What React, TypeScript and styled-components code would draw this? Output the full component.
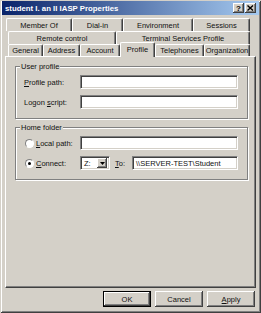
import * as React from 'react';
import styled, { createGlobalStyle } from 'styled-components';

const face = '#d4d0c8';
const shadow = '#808080';
const darkShadow = '#404040';

const GlobalStyle = createGlobalStyle`
    html, body {
        margin: 0;
        padding: 0;
        background: ${face};
    }
`;

const Window = styled.div`
    width: 261px;
    height: 313px;
    box-sizing: border-box;
    padding: 1px 4px 2px 4px;
    background: ${face};
    box-shadow: inset 1px 1px ${face}, inset -1px -1px ${darkShadow}, inset 2px 2px #fff, inset -2px -2px ${shadow};
    display: flex;
    flex-direction: column;
    font-family: 'Liberation Sans', Arial, sans-serif;
    font-size: 7.5px;
    color: #111;
`;

const TitleBar = styled.div`
    height: 14px;
    margin: 0 -2px;
    padding: 0 3px 0 3px;
    display: flex;
    align-items: center;
    background: linear-gradient(to right, #0a246a, #a6caf0);
    color: #fff;
    font-weight: bold;
    font-size: 7.8px;
    .title {
        flex: 1;
        white-space: nowrap;
    }
`;

const CaptionButton = styled.div`
    width: 11px;
    height: 10px;
    box-sizing: border-box;
    display: flex;
    align-items: center;
    justify-content: center;
    background: ${face};
    color: #000;
    font-size: 8px;
    font-weight: bold;
    box-shadow: inset -1px -1px ${darkShadow}, inset 1px 1px #fff, inset -2px -2px ${shadow};
    & + & {
        margin-left: 1px;
    }
`;

const TabStrip = styled.div`
    margin: 3px 1px 0;
    display: flex;
    flex-direction: column;
`;

const TabRow = styled.div<{ $left: number; $height: number }>`
    height: ${p => p.$height}px;
    padding: 0 6px 0 ${p => p.$left}px;
    display: flex;
`;

const Tab = styled.div<{ $w: number; $active?: boolean }>`
    flex: 0 0 ${p => p.$w}px;
    box-sizing: border-box;
    display: flex;
    align-items: center;
    justify-content: center;
    white-space: nowrap;
    background: ${face};
    border-top: 1px solid #fff;
    border-left: 1px solid #fff;
    border-right: 1px solid ${darkShadow};
    box-shadow: inset -1px 0 ${shadow};
    border-radius: 2px 2px 0 0;
    ${p =>
        p.$active &&
        `
        margin-top: -2px;
        margin-bottom: -1px;
        padding-bottom: 1px;
        position: relative;
        z-index: 1;
    `}
`;

const Panel = styled.div`
    height: 232px;
    margin: 0 1px;
    box-sizing: border-box;
    border-top: 1px solid #fff;
    border-left: 1px solid #fff;
    border-right: 1px solid ${darkShadow};
    border-bottom: 1px solid ${darkShadow};
    box-shadow: inset -1px -1px ${shadow};
    padding: 0 7px 0 9px;
    display: flex;
    flex-direction: column;
`;

const Group = styled.fieldset<{ $top: number }>`
    margin: ${p => p.$top}px 0 0;
    padding: 4px 9px 9px 8px;
    min-width: 0;
    border: 1px solid ${shadow};
    box-shadow: inset 1px 1px #fff, 1px 1px #fff;
    display: flex;
    flex-direction: column;
    gap: 6px;
    legend {
        margin-left: -4px;
        padding: 0 1px;
        background: ${face};
        line-height: 9px;
    }
`;

const Row = styled.div`
    height: 14px;
    display: flex;
    align-items: center;
`;

const Label = styled.label`
    flex: 0 0 56px;
    display: flex;
    align-items: center;
    white-space: nowrap;
`;

const Radio = styled.span<{ $checked?: boolean }>`
    width: 9px;
    height: 9px;
    margin: 0 2px 0 1px;
    box-sizing: border-box;
    border-radius: 50%;
    background: #fff;
    border: 1px solid ${shadow};
    border-right-color: #fff;
    border-bottom-color: #fff;
    display: flex;
    align-items: center;
    justify-content: center;
    &::after {
        content: '';
        width: 3px;
        height: 3px;
        border-radius: 50%;
        background: ${p => (p.$checked ? '#000' : 'transparent')};
    }
`;

const TextBox = styled.div<{ $w?: number }>`
    flex: ${p => (p.$w ? `0 0 ${p.$w}px` : '1')};
    height: 14px;
    box-sizing: border-box;
    background: #fff;
    border-top: 1px solid ${shadow};
    border-left: 1px solid ${shadow};
    border-right: 1px solid #fff;
    border-bottom: 1px solid #fff;
    box-shadow: inset 1px 1px ${darkShadow}, inset -1px -1px ${face};
    padding: 0 3px;
    display: flex;
    align-items: center;
    white-space: nowrap;
    overflow: hidden;
`;

const Combo = styled(TextBox)`
    padding: 2px 2px 2px 3px;
    justify-content: space-between;
`;

const DropButton = styled.span`
    width: 10px;
    height: 10px;
    box-sizing: border-box;
    background: ${face};
    box-shadow: inset -1px -1px ${darkShadow}, inset 1px 1px #fff, inset -2px -2px ${shadow};
    display: flex;
    align-items: center;
    justify-content: center;
`;

const ToLabel = styled.span`
    margin: 0 7px 0 5px;
`;

const U = styled.span`
    text-decoration: underline;
`;

const ButtonRow = styled.div`
    margin-top: 3px;
    padding-right: 2px;
    display: flex;
    justify-content: flex-end;
    gap: 4px;
`;

const Button = styled.div<{ $default?: boolean }>`
    width: 48px;
    height: 16px;
    box-sizing: border-box;
    display: flex;
    align-items: center;
    justify-content: center;
    background: ${face};
    border: ${p => (p.$default ? '1px solid #000' : 'none')};
    box-shadow: inset -1px -1px ${darkShadow}, inset 1px 1px #fff, inset -2px -2px ${shadow};
`;

const rows = [
    {
        left: 1,
        height: 13,
        tabs: [
            { label: 'Member Of', w: 66 },
            { label: 'Dial-in', w: 51 },
            { label: 'Environment', w: 70 },
            { label: 'Sessions', w: 57 },
        ],
    },
    {
        left: 3,
        height: 13,
        tabs: [
            { label: 'Remote control', w: 108 },
            { label: 'Terminal Services Profile', w: 134 },
        ],
    },
    {
        left: 3,
        height: 12,
        tabs: [
            { label: 'General', w: 35 },
            { label: 'Address', w: 37 },
            { label: 'Account', w: 40 },
            { label: 'Profile', w: 35, active: true },
            { label: 'Telephones', w: 49 },
            { label: 'Organization', w: 46 },
        ],
    },
];

export default function App() {
    return (
        <>
            <GlobalStyle />
            <Window>
                <TitleBar>
                    <span className="title">student I. an II IASP Properties</span>
                    <CaptionButton>?</CaptionButton>
                    <CaptionButton>
                        <svg width="7" height="6" viewBox="0 0 7 6">
                            <path d="M0.5 0.5 L6 5.5 M6 0.5 L0.5 5.5" stroke="#000" strokeWidth="1.4" />
                        </svg>
                    </CaptionButton>
                </TitleBar>

                <TabStrip>
                    {rows.map((row, i) => (
                        <TabRow key={i} $left={row.left} $height={row.height}>
                            {row.tabs.map(t => (
                                <Tab key={t.label} $w={t.w} $active={'active' in t && t.active}>
                                    {t.label}
                                </Tab>
                            ))}
                        </TabRow>
                    ))}
                </TabStrip>

                <Panel>
                    <Group $top={5}>
                        <legend>User profile</legend>
                        <Row>
                            <Label>
                                <span>
                                    <U>P</U>rofile path:
                                </span>
                            </Label>
                            <TextBox />
                        </Row>
                        <Row>
                            <Label>
                                <span>
                                    Logon <U>s</U>cript:
                                </span>
                            </Label>
                            <TextBox />
                        </Row>
                    </Group>

                    <Group $top={4}>
                        <legend>Home folder</legend>
                        <Row>
                            <Label>
                                <Radio />
                                <span>
                                    <U>L</U>ocal path:
                                </span>
                            </Label>
                            <TextBox />
                        </Row>
                        <Row>
                            <Label>
                                <Radio $checked />
                                <span>
                                    <U>C</U>onnect:
                                </span>
                            </Label>
                            <Combo $w={30}>
                                <span>Z:</span>
                                <DropButton>
                                    <svg width="5" height="3" viewBox="0 0 5 3">
                                        <path d="M0 0 H5 L2.5 3 Z" fill="#000" />
                                    </svg>
                                </DropButton>
                            </Combo>
                            <ToLabel>
                                <U>T</U>o:
                            </ToLabel>
                            <TextBox>\\SERVER-TEST\Student</TextBox>
                        </Row>
                    </Group>
                </Panel>

                <ButtonRow>
                    <Button $default>OK</Button>
                    <Button>Cancel</Button>
                    <Button>
                        <U>A</U>pply
                    </Button>
                </ButtonRow>
            </Window>
        </>
    );
}
